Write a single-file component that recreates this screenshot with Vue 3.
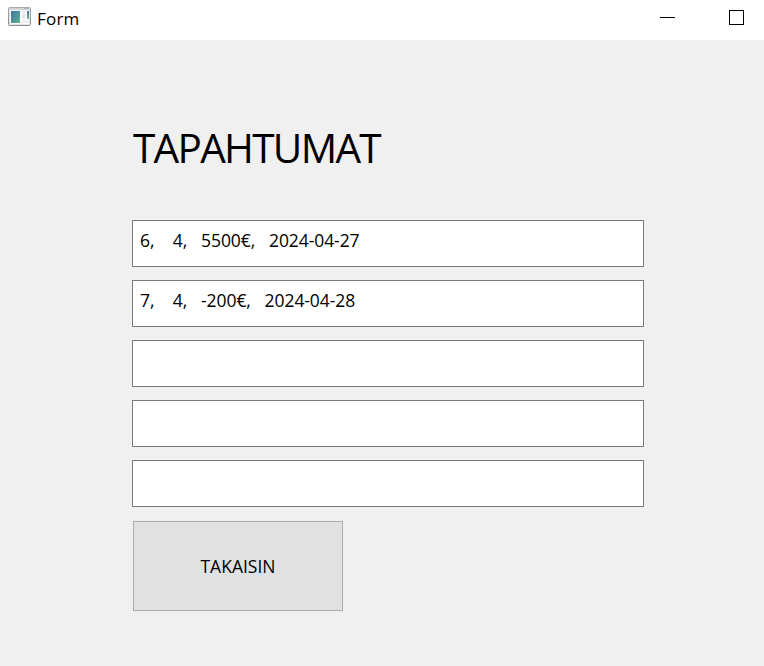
<script setup>
const events = [
  '6,    4,   5500€,   2024-04-27',
  '7,    4,   -200€,   2024-04-28',
  '',
  '',
  '',
]
</script>

<template>
  <div class="window">
    <header class="titlebar">
      <svg class="app-icon" width="24" height="20" viewBox="0 0 24 20">
        <defs>
          <linearGradient id="pane" x1="0" y1="0" x2="1" y2="1">
            <stop offset="0" stop-color="#4277a8" />
            <stop offset="0.5" stop-color="#4b939a" />
            <stop offset="1" stop-color="#62b583" />
          </linearGradient>
          <linearGradient id="strip" x1="0" y1="0" x2="0" y2="1">
            <stop offset="0" stop-color="#4277a8" />
            <stop offset="1" stop-color="#70b78c" />
          </linearGradient>
          <linearGradient id="frame" x1="0" y1="0" x2="0" y2="1">
            <stop offset="0" stop-color="#a5acb2" />
            <stop offset="1" stop-color="#858b92" />
          </linearGradient>
        </defs>
        <rect x="0.5" y="0.5" width="22" height="18" rx="1" fill="#e3e6e9" stroke="url(#frame)" />
        <rect x="1" y="1" width="21" height="2" fill="#d0d5da" />
        <rect x="16" y="1" width="5" height="1" fill="#aab2ba" />
        <rect x="2" y="3.5" width="19" height="13.5" fill="#fff" />
        <rect x="3" y="4" width="9" height="12" fill="url(#pane)" />
        <rect x="13.5" y="4" width="4" height="8" fill="#e9eaeb" />
        <rect x="13.5" y="13" width="7.5" height="3" fill="#eeefef" />
        <rect x="19" y="4" width="2" height="8" fill="url(#strip)" />
      </svg>
      <span class="title">Form</span>
      <svg class="controls" width="84" height="15" viewBox="0 0 84 15" shape-rendering="crispEdges">
        <rect x="0" y="7" width="15" height="1" fill="#000" />
        <rect x="69.5" y="0.5" width="14" height="14" fill="none" stroke="#000" />
      </svg>
    </header>
    <main class="content">
      <h1 class="heading">TAPAHTUMAT</h1>
      <div class="list">
        <div v-for="(event, i) in events" :key="i" class="field">{{ event }}</div>
      </div>
      <button class="back" type="button">TAKAISIN</button>
    </main>
  </div>
</template>

<style>
body {
  margin: 0;
}
</style>

<style scoped>
.window {
  box-sizing: border-box;
  width: 764px;
  height: 666px;
  overflow: hidden;
  background: #f0f0f0;
  color: #000;
  font-family: "Open Sans", "Noto Sans", sans-serif;
}
.titlebar {
  box-sizing: border-box;
  display: flex;
  align-items: flex-start;
  height: 40px;
  padding: 7px 20px 0 8px;
  background: #fff;
}
.title {
  margin: 0 0 0 5px;
  font-size: 17px;
  line-height: 23px;
  letter-spacing: 0.2px;
}
.controls {
  margin: 3px 0 0 auto;
}
.content {
  padding: 79px 120px 0 132px;
}
.heading {
  margin: 0;
  padding-left: 1px;
  height: 101px;
  font-size: 40.5px;
  line-height: 58px;
  font-weight: 400;
  letter-spacing: -1.7px;
}
.list {
  display: grid;
  gap: 13px;
}
.field {
  box-sizing: border-box;
  height: 47px;
  padding: 7px 7px;
  border: 1px solid #7a7a7a;
  background: #fff;
  font-size: 17.5px;
  line-height: 24px;
  letter-spacing: -0.08px;
  word-spacing: 0.15px;
  white-space: pre;
}
.back {
  display: block;
  box-sizing: border-box;
  width: 210px;
  height: 90px;
  margin: 14px 0 0 1px;
  padding: 0;
  border: 1px solid #adadad;
  border-radius: 0;
  background: #e1e1e1;
  color: #000;
  font-family: inherit;
  font-size: 17.5px;
  line-height: 24px;
}
</style>
